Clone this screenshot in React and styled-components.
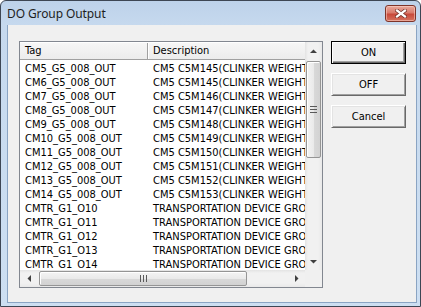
import React from "react";
import styled, { createGlobalStyle } from "styled-components";

const Global = createGlobalStyle`
  html, body { margin: 0; padding: 0; background: #ffffff; }
  #root { width: 421px; height: 307px; }
`;

const UI = `"DejaVu Sans Condensed", "DejaVu Sans", "Liberation Sans", sans-serif`;

const Window = styled.div`
  box-sizing: border-box;
  width: 421px;
  height: 307px;
  border: 1px solid #3d4654;
  border-radius: 6px 6px 0 0;
  background: linear-gradient(to bottom, #bdd2ea 0px, #c6d9ee 24px, #cddff2 100%);
  display: flex;
  flex-direction: column;
  padding: 0 3px 3px 6px;
  overflow: hidden;
`;

const TitleBar = styled.div`
  height: 24px;
  flex: none;
  display: flex;
  align-items: center;
  padding: 0 1px 0 0;
  margin-left: 0;
`;

const Title = styled.div`
  font-family: "Noto Sans", "Open Sans", sans-serif;
  font-size: 12px;
  color: #1e1e1e;
  letter-spacing: -0.1px;
  padding-top: 1px;
`;

const CloseBtn = styled.div`
  margin-left: auto;
  width: 31px;
  height: 17px;
  box-sizing: border-box;
  border: 1px solid #7e3429;
  border-radius: 3px;
  background: linear-gradient(to bottom, #e9a99c 0%, #d97b6c 45%, #c8493a 55%, #d6735f 100%);
  box-shadow: inset 0 0 0 1px rgba(255, 220, 210, 0.5);
  display: flex;
  align-items: center;
  justify-content: center;
`;

const Client = styled.div`
  flex: 1;
  box-sizing: border-box;
  background: #f0f0f0;
  border: 1px solid #8aa4c3;
  border-top: none;
  display: flex;
  align-items: flex-start;
  padding: 16px 0 0 11px;
  gap: 8px;
`;

const ListView = styled.div`
  box-sizing: border-box;
  width: 304px;
  height: 247px;
  border: 1px solid #828790;
  background: #ffffff;
  display: grid;
  grid-template-columns: 1fr 17px;
  grid-template-rows: 1fr 17px;
  overflow: hidden;
`;

const Content = styled.div`
  overflow: hidden;
  display: flex;
  flex-direction: column;
  font-family: ${UI};
  font-size: 11px;
  color: #000;
`;

const Header = styled.div`
  flex: none;
  height: 18px;
  display: flex;
  box-sizing: border-box;
  background: linear-gradient(to bottom, #f6f6f6, #ececec);
  border-top: 1px solid #ffffff;
  border-bottom: 1px solid #a0a0a0;
`;

const HeaderCell = styled.div`
  box-sizing: border-box;
  width: ${(p) => p.$w}px;
  flex: ${(p) => (p.$grow ? 1 : "none")};
  padding-left: 5px;
  line-height: 16px;
  border-right: ${(p) => (p.$grow ? "none" : "1px solid #a0a0a0")};
  box-shadow: ${(p) => (p.$first ? "none" : "inset 1px 0 0 #ffffff")};
  white-space: nowrap;
  overflow: hidden;
`;

const Rows = styled.div`
  padding-top: 2px;
`;

const Row = styled.div`
  display: flex;
  height: 14px;
  line-height: 14px;
  white-space: nowrap;
`;

const Cell = styled.div`
  box-sizing: border-box;
  width: ${(p) => p.$w}px;
  flex: ${(p) => (p.$grow ? 1 : "none")};
  padding-left: 5px;
  overflow: hidden;
`;

const VScroll = styled.div`
  display: flex;
  flex-direction: column;
  background: linear-gradient(to right, #e3e3e3 0px, #f1f1f1 3px, #f1f1f1 13px, #e9e9e9 17px);
`;

const HScroll = styled.div`
  display: flex;
  flex-direction: row;
  background: linear-gradient(to bottom, #e3e3e3 0px, #f1f1f1 3px, #f1f1f1 13px, #e9e9e9 17px);
`;

const Arrow = styled.div`
  flex: none;
  width: 17px;
  height: 17px;
  display: flex;
  align-items: center;
  justify-content: center;
`;

const Track = styled.div`
  flex: 1;
  display: flex;
  flex-direction: ${(p) => (p.$vertical ? "column" : "row")};
`;

const Thumb = styled.div`
  box-sizing: border-box;
  flex: none;
  ${(p) =>
    p.$vertical
      ? `width: 15px; height: ${p.$size}px; margin: ${p.$offset}px 0 0 1px;
         background: linear-gradient(to right, #f4f4f4 0%, #eaeaea 50%, #d9d9d9 51%, #d2d2d2 100%);`
      : `height: 15px; width: ${p.$size}px; margin: 1px 0 0 ${p.$offset}px;
         background: linear-gradient(to bottom, #f4f4f4 0%, #eaeaea 50%, #d9d9d9 51%, #d2d2d2 100%);`}
  border: 1px solid #959595;
  border-radius: 2px;
  box-shadow: inset 1px 1px 0 #ffffff;
  display: flex;
  align-items: center;
  justify-content: center;
`;

const Corner = styled.div`
  background: #f0f0f0;
`;

const Buttons = styled.div`
  display: flex;
  flex-direction: column;
  gap: 9px;
`;

const Button = styled.div`
  box-sizing: border-box;
  width: 75px;
  height: 23px;
  background: #f0f0f0;
  font-family: ${UI};
  font-size: 11px;
  color: #000;
  display: flex;
  align-items: center;
  justify-content: center;
  border-top: 1px solid ${(p) => (p.$default ? "#000" : "#ffffff")};
  border-left: 1px solid ${(p) => (p.$default ? "#000" : "#ffffff")};
  border-right: 1px solid ${(p) => (p.$default ? "#000" : "#696969")};
  border-bottom: 1px solid ${(p) => (p.$default ? "#000" : "#696969")};
  box-shadow: ${(p) =>
    p.$default
      ? "inset 1px 1px 0 #ffffff, inset -1px -1px 0 #696969, inset -2px -2px 0 #a0a0a0"
      : "inset 1px 1px 0 #e3e3e3, inset -1px -1px 0 #a0a0a0"};
`;

const ArrowIcon = ({ dir }) => {
  const pts = {
    up: "0,4 7,4 3.5,0.5",
    down: "0,0 7,0 3.5,3.5",
    left: "4,0 4,7 0.5,3.5",
    right: "0,0 0,7 3.5,3.5",
  }[dir];
  const vertical = dir === "up" || dir === "down";
  return (
    <svg width={vertical ? 7 : 4} height={vertical ? 4 : 7} viewBox={vertical ? "0 0 7 4" : "0 0 4 7"}>
      <polygon points={pts} fill="#404040" />
    </svg>
  );
};

const GripV = () => (
  <svg width="7" height="7" viewBox="0 0 7 7">
    <rect x="0" y="0" width="7" height="1" fill="#5a5a5a" />
    <rect x="0" y="3" width="7" height="1" fill="#5a5a5a" />
    <rect x="0" y="6" width="7" height="1" fill="#5a5a5a" />
  </svg>
);

const GripH = () => (
  <svg width="7" height="7" viewBox="0 0 7 7">
    <rect x="0" y="0" width="1" height="7" fill="#5a5a5a" />
    <rect x="3" y="0" width="1" height="7" fill="#5a5a5a" />
    <rect x="6" y="0" width="1" height="7" fill="#5a5a5a" />
  </svg>
);

const CloseX = () => (
  <svg width="12" height="9" viewBox="0 0 12 9">
    <path d="M2 1.5 L10 7.5 M10 1.5 L2 7.5" stroke="#6b2a22" strokeWidth="3.6" strokeLinecap="square" />
    <path d="M2 1.5 L10 7.5 M10 1.5 L2 7.5" stroke="#ffffff" strokeWidth="2.2" strokeLinecap="square" />
  </svg>
);

const rows = [
  ["CM5_G5_008_OUT", "CM5 C5M145(CLINKER WEIGHT SCALE DUST COLLECTOR)"],
  ["CM6_G5_008_OUT", "CM5 C5M145(CLINKER WEIGHT SCALE DUST COLLECTOR)"],
  ["CM7_G5_008_OUT", "CM5 C5M146(CLINKER WEIGHT SCALE DUST COLLECTOR)"],
  ["CM8_G5_008_OUT", "CM5 C5M147(CLINKER WEIGHT SCALE DUST COLLECTOR)"],
  ["CM9_G5_008_OUT", "CM5 C5M148(CLINKER WEIGHT SCALE DUST COLLECTOR)"],
  ["CM10_G5_008_OUT", "CM5 C5M149(CLINKER WEIGHT SCALE DUST COLLECTOR)"],
  ["CM11_G5_008_OUT", "CM5 C5M150(CLINKER WEIGHT SCALE DUST COLLECTOR)"],
  ["CM12_G5_008_OUT", "CM5 C5M151(CLINKER WEIGHT SCALE DUST COLLECTOR)"],
  ["CM13_G5_008_OUT", "CM5 C5M152(CLINKER WEIGHT SCALE DUST COLLECTOR)"],
  ["CM14_G5_008_OUT", "CM5 C5M153(CLINKER WEIGHT SCALE DUST COLLECTOR)"],
  ["CMTR_G1_O10", "TRANSPORTATION DEVICE GROUP 1 OUTPUT 10"],
  ["CMTR_G1_O11", "TRANSPORTATION DEVICE GROUP 1 OUTPUT 11"],
  ["CMTR_G1_O12", "TRANSPORTATION DEVICE GROUP 1 OUTPUT 12"],
  ["CMTR_G1_O13", "TRANSPORTATION DEVICE GROUP 1 OUTPUT 13"],
  ["CMTR_G1_O14", "TRANSPORTATION DEVICE GROUP 1 OUTPUT 14"],
];

export default function App() {
  return (
    <>
      <Global />
      <Window>
        <TitleBar>
          <Title>DO Group Output</Title>
          <CloseBtn>
            <CloseX />
          </CloseBtn>
        </TitleBar>
        <Client>
          <ListView>
            <Content>
              <Header>
                <HeaderCell $w={128} $first>Tag</HeaderCell>
                <HeaderCell $grow>Description</HeaderCell>
              </Header>
              <Rows>
                {rows.map(([tag, desc]) => (
                  <Row key={tag}>
                    <Cell $w={128}>{tag}</Cell>
                    <Cell $grow>{desc}</Cell>
                  </Row>
                ))}
              </Rows>
            </Content>
            <VScroll>
              <Arrow>
                <ArrowIcon dir="up" />
              </Arrow>
              <Track $vertical>
                <Thumb $vertical $size={97} $offset={2}>
                  <GripV />
                </Thumb>
              </Track>
              <Arrow>
                <ArrowIcon dir="down" />
              </Arrow>
            </VScroll>
            <HScroll>
              <Arrow>
                <ArrowIcon dir="left" />
              </Arrow>
              <Track>
                <Thumb $size={208} $offset={2}>
                  <GripH />
                </Thumb>
              </Track>
              <Arrow>
                <ArrowIcon dir="right" />
              </Arrow>
            </HScroll>
            <Corner />
          </ListView>
          <Buttons>
            <Button $default>ON</Button>
            <Button>OFF</Button>
            <Button>Cancel</Button>
          </Buttons>
        </Client>
      </Window>
    </>
  );
}
